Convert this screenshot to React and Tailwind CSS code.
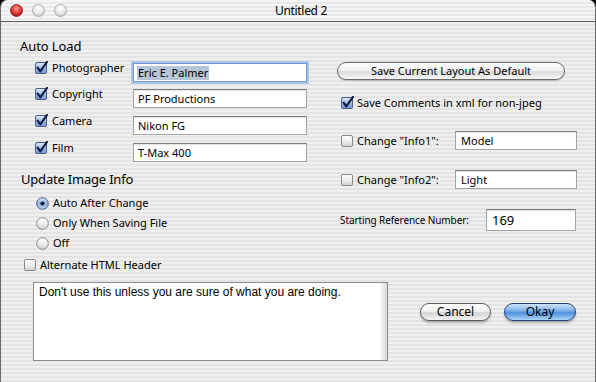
import React from "react";

const Check = ({ on }) => (
  <svg width="14" height="14" viewBox="0 0 14 14" className="block shrink-0">
    <rect x="0.5" y="1.5" width="11" height="11" rx="1.5" fill={on ? "url(#cbOn)" : "url(#cbOff)"} stroke={on ? "#4b5f87" : "#8a8a8a"} />
    {on && (
      <path d="M2.6 6.6 L5.3 10.4 L12 0.9" fill="none" stroke="#101c44" strokeWidth="2.1" strokeLinecap="round" strokeLinejoin="round" />
    )}
  </svg>
);

const Radio = ({ on }) => (
  <svg width="13" height="13" viewBox="0 0 13 13" className="block shrink-0">
    <circle cx="6.5" cy="6.5" r="5.8" fill={on ? "url(#rdOn)" : "url(#cbOff)"} stroke={on ? "#4b5f87" : "#8a8a8a"} />
    {on && <circle cx="6.5" cy="6.5" r="2.1" fill="#14193a" />}
  </svg>
);

const Field = ({ w, h = "h-[19px]", children, focus, big }) => (
  <div
    className={`${w} ${h} bg-white border ${
      focus
        ? "border-[#6f98d2] shadow-[0_0_0_2px_#a9c4e8]"
        : "border-[#a3a3a3] border-t-[#7c7c7c] shadow-[inset_0_1px_1px_rgba(0,0,0,0.12)]"
    } flex items-center pl-[3px] ${big ? "text-[13px]" : "text-[11px]"} leading-[14px] text-black`}
  >
    {children}
  </div>
);

const stripes =
  "bg-[repeating-linear-gradient(180deg,#efefef_0px,#efefef_2px,#e4e4e4_2px,#e4e4e4_4px)]";

export default function App() {
  return (
    <div className="w-[596px] h-[382px] bg-black overflow-hidden font-['Noto_Sans',sans-serif] text-black">
      <svg width="0" height="0" className="absolute">
        <defs>
          <linearGradient id="cbOn" x1="0" y1="0" x2="0" y2="1">
            <stop offset="0" stopColor="#e4edf9" />
            <stop offset="0.5" stopColor="#9dbbe3" />
            <stop offset="1" stopColor="#6e97d2" />
          </linearGradient>
          <linearGradient id="cbOff" x1="0" y1="0" x2="0" y2="1">
            <stop offset="0" stopColor="#ffffff" />
            <stop offset="0.55" stopColor="#ececec" />
            <stop offset="1" stopColor="#cfcfcf" />
          </linearGradient>
          <linearGradient id="rdOn" x1="0" y1="0" x2="0" y2="1">
            <stop offset="0" stopColor="#dfeaf8" />
            <stop offset="0.5" stopColor="#92b3e0" />
            <stop offset="1" stopColor="#b9d2f1" />
          </linearGradient>
          <radialGradient id="red" cx="0.5" cy="0.35" r="0.6">
            <stop offset="0" stopColor="#ff9a9a" />
            <stop offset="0.6" stopColor="#e03a3a" />
            <stop offset="1" stopColor="#a81616" />
          </radialGradient>
          <radialGradient id="gry" cx="0.5" cy="0.35" r="0.6">
            <stop offset="0" stopColor="#ffffff" />
            <stop offset="0.7" stopColor="#e6e6e6" />
            <stop offset="1" stopColor="#c8c8c8" />
          </radialGradient>
        </defs>
      </svg>
      <div className="w-[596px] h-[382px] rounded-t-[7px] overflow-hidden border-x border-[#6a6a6a] flex flex-col">
        {/* Title bar */}
        <div className={`h-[22px] shrink-0 border-b border-[#5e5e5e] bg-[repeating-linear-gradient(180deg,#f5f5f5_0px,#f5f5f5_2px,#e8e8e8_2px,#e8e8e8_4px)] grid grid-cols-[1fr_auto_1fr] items-center`}>
          <div className="flex items-center gap-[9px] pl-[9px]">
            <svg width="13" height="13" viewBox="0 0 13 13" className="block">
              <circle cx="6.5" cy="6.5" r="6" fill="url(#red)" stroke="#8a1a1a" strokeWidth="0.8" />
            </svg>
            <svg width="13" height="13" viewBox="0 0 13 13" className="block">
              <circle cx="6.5" cy="6.5" r="6" fill="url(#gry)" stroke="#a5a5a5" strokeWidth="0.8" />
            </svg>
            <svg width="13" height="13" viewBox="0 0 13 13" className="block">
              <circle cx="6.5" cy="6.5" r="6" fill="url(#gry)" stroke="#a5a5a5" strokeWidth="0.8" />
            </svg>
          </div>
          <div className="text-[12px] leading-[16px] tracking-[-0.3px] pl-[6px]">Untitled 2</div>
          <div />
        </div>

        {/* Body */}
        <div className={`flex-1 ${stripes} flex flex-col`}>
          <div className="flex">
            {/* Left column */}
            <div className="w-[336px] pl-[19px] pt-[15px] flex flex-col">
              <div className="text-[13px] leading-[18px] tracking-[-0.1px]">Auto Load</div>
              <div className="ml-[15px] flex flex-col">
                {[
                  ["Photographer", "Eric E. Palmer", true],
                  ["Copyright", "PF Productions"],
                  ["Camera", "Nikon FG"],
                  ["Film", "T-Max 400"],
                ].map(([lab, val, focus], i) => (
                  <div key={lab} className={`flex items-start h-[19px] ${i === 0 ? "mt-[8px]" : i === 1 ? "mt-[7px]" : "mt-[8px]"}`}>
                    <div className="flex items-center gap-[3px] w-[98px] h-[14px] -mt-[2px] text-[11px] leading-[14px]">
                      <Check on />
                      <span>{lab}</span>
                    </div>
                    <Field w="w-[174px]" focus={focus}>
                      {focus ? <span className="bg-[#b6c5d8] pl-[1px] pr-[1px]">{val}</span> : <span className="pl-[1px]">{val}</span>}
                    </Field>
                  </div>
                ))}
              </div>
              <div className="mt-[8px] ml-[1px] text-[13px] leading-[18px] tracking-[-0.2px]">Update Image Info</div>
              <div className="mt-[5px] ml-[16px] flex flex-col">
                {[
                  ["Auto After Change", true],
                  ["Only When Saving File"],
                  ["Off"],
                ].map(([lab, on]) => (
                  <div key={lab} className="h-[20px] flex items-center gap-[4px] text-[11px] leading-[14px]">
                    <Radio on={on} />
                    <span>{lab}</span>
                  </div>
                ))}
              </div>
              <div className="mt-[5px] ml-[4px] h-[14px] flex items-center gap-[2px] text-[11px] leading-[14px]">
                <Check />
                <span>Alternate HTML Header</span>
              </div>
            </div>

            {/* Right column */}
            <div className="pt-[40px] flex flex-col">
              <div className="w-[228px] h-[18px] rounded-full border border-[#6a6a6a] bg-[linear-gradient(180deg,#ffffff_0%,#f2f2f2_45%,#dcdcdc_55%,#f6f6f6_100%)] shadow-[0_1px_1px_rgba(0,0,0,0.2)] flex items-center justify-center text-[11px] leading-[14px]">
                Save Current Layout As Default
              </div>
              <div className="mt-[16px] ml-[4px] h-[14px] flex items-center gap-[2px] text-[11px] leading-[14px]">
                <Check on />
                <span>Save Comments in xml for non-jpeg</span>
              </div>
              {[
                ["Change \"Info1\":", "Model", "mt-[21px]"],
                ["Change \"Info2\":", "Light", "mt-[20px]"],
              ].map(([lab, val, mt]) => (
                <div key={lab} className={`${mt} ml-[4px] h-[19px] flex items-center`}>
                  <div className="w-[114px] flex items-center gap-[2px] text-[11px] leading-[14px]">
                    <Check />
                    <span>{lab}</span>
                  </div>
                  <Field w="w-[122px]">
                    <span className="pl-[2px]">{val}</span>
                  </Field>
                </div>
              ))}
              <div className="mt-[20px] ml-[3px] h-[22px] flex items-center">
                <div className="w-[146px] text-[10px] leading-[13px] tracking-[-0.1px]">Starting Reference Number:</div>
                <Field w="w-[90px]" h="h-[22px]" big>
                  <span className="pl-[2px]">169</span>
                </Field>
              </div>
            </div>
          </div>

          {/* Bottom */}
          <div className="mt-[10px] flex items-start">
            <div className="ml-[32px] w-[355px] h-[79px] bg-white border border-[#8c8c8c] flex">
              <div className="flex-1 pl-[5px] pt-[2px] font-['Liberation_Sans',Arial,sans-serif] text-[12px] leading-[15px]">
                Don't use this unless you are sure of what you are doing.
              </div>
              <div className="w-[8px] bg-[linear-gradient(90deg,#ffffff,#d9d9d9)]" />
            </div>
            <div className="ml-[32px] mt-[21px] flex gap-[13px]">
              <div className="w-[71px] h-[18px] rounded-full border border-[#5e5e5e] bg-[linear-gradient(180deg,#ffffff_0%,#f0f0f0_45%,#d4d4d4_55%,#f4f4f4_100%)] shadow-[0_2px_2px_rgba(0,0,0,0.25)] flex items-center justify-center text-[12px] leading-[14px]">
                Cancel
              </div>
              <div className="w-[72px] h-[18px] rounded-full border border-[#233f7a] bg-[linear-gradient(180deg,#cfe4fb_0%,#7fb2ea_42%,#4f8fdc_55%,#a9d6fb_100%)] shadow-[0_2px_2px_rgba(0,0,0,0.25)] flex items-center justify-center text-[12px] leading-[14px]">
                Okay
              </div>
            </div>
          </div>
        </div>
      </div>
    </div>
  );
}
